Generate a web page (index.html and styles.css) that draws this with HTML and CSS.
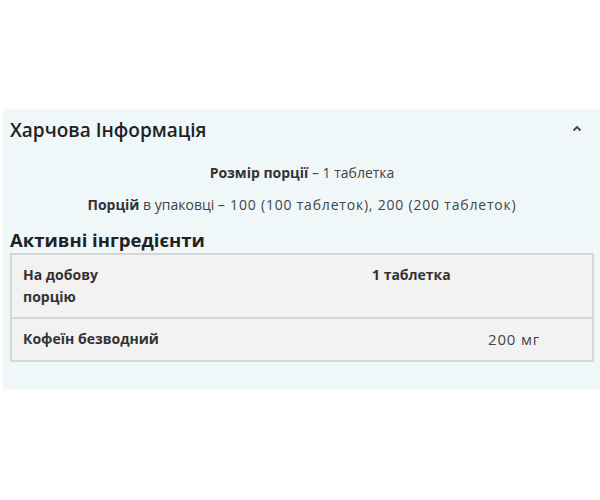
FILE: index.html
```html
<!DOCTYPE html>
<html lang="uk">
<head>
<meta charset="utf-8">
<link rel="stylesheet" href="styles.css">
</head>
<body>
<section class="panel">
  <div class="panel-head">
    <h2 class="title">Харчова Інформація</h2>
    <svg class="chev" width="10" height="7" viewBox="0 0 10 7"><path d="M1.5 5.5 L5 2 L8.5 5.5" fill="none" stroke="#444" stroke-width="1.8"/></svg>
  </div>
  <p class="line line-1"><b>Розмір порції</b> – 1 таблетка</p>
  <p class="line line-2"><b>Порцій</b> в упаковці <span class="num">– 100 (100 таблеток), 200 (200 таблеток)</span></p>
  <h3 class="sub">Активні інгредієнти</h3>
  <div class="table">
    <div class="row row-head">
      <div class="cell c1 b">На добову<br>порцію</div>
      <div class="cell c2 b">1 таблетка</div>
    </div>
    <div class="row">
      <div class="cell c1 b">Кофеїн безводний</div>
      <div class="cell c2 amt">200 мг</div>
    </div>
  </div>
</section>
</body>
</html>
```
FILE: styles.css
```css
html, body { margin: 0; padding: 0; background: #fff; }
body { font-family: "Open Sans", "Noto Sans", sans-serif; color: #333; }
.panel {
  margin: 109px 0 0 3px;
  height: 280px;
  box-sizing: border-box;
  background: #eff7f9;
  padding: 9px 6px 0 7px;
}
.panel-head { display: flex; justify-content: space-between; align-items: center; height: 24px; }
.title { margin: 0; font-size: 19px; line-height: 24px; font-weight: 600; color: #222; }
.chev { margin-right: 12px; margin-top: -4px; }
.line { margin: 0; text-align: center; font-size: 14px; line-height: 20px; color: #444; }
.line b { font-weight: 700; color: #333; }
.line-1 { margin-top: 21px; }
.line-2 { margin-top: 12px; }
.num { letter-spacing: 0.8px; }
.sub { margin: 13px 0 0; font-size: 18.5px; line-height: 24px; font-weight: 700; color: #222; }
.table {
  margin: 1px 0 0 0;
  width: 584px;
  background: #f2f2f2;
  border: 2px solid #d6d6d6;
  box-sizing: border-box;
}
.row { display: grid; grid-template-columns: 360px 1fr; }
.row + .row { border-top: 2px solid #d6d6d6; }
.cell { font-size: 14px; line-height: 22px; color: #333; }
.c1 { padding: 9px 10px 10px 11px; }
.row-head .c1 { padding-bottom: 9px; }
.b { font-weight: 700; }
.row-head .c2 { padding: 9px 0 0 0; }
.amt { text-align: right; padding: 9px 52px 0 0; color: #444; font-size: 15px; letter-spacing: 0.8px; }
```
